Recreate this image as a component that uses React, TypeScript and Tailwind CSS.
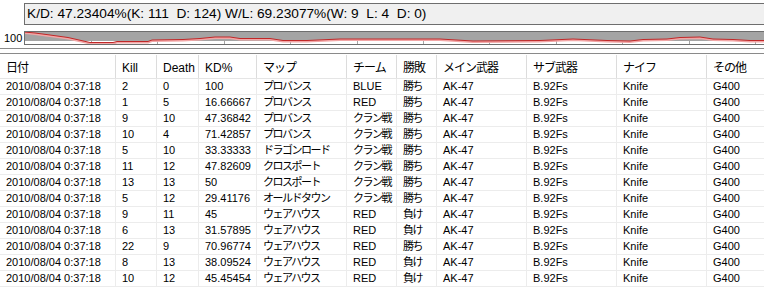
import { memo } from 'react';

const FONT = { fontFamily: '"Liberation Sans", "Noto Sans CJK JP", sans-serif' };

const columns = ['日付', 'Kill', 'Death', 'KD%', 'マップ', 'チーム', '勝敗', 'メイン武器', 'サブ武器', 'ナイフ', 'その他'];

const rows: string[][] = [
  ['2', '0', '100', 'プロバンス', 'BLUE', '勝ち'],
  ['1', '5', '16.66667', 'プロバンス', 'RED', '勝ち'],
  ['9', '10', '47.36842', 'プロバンス', 'クラン戦', '勝ち'],
  ['10', '4', '71.42857', 'プロバンス', 'クラン戦', '勝ち'],
  ['5', '10', '33.33333', 'ドラゴンロード', 'クラン戦', '勝ち'],
  ['11', '12', '47.82609', 'クロスポート', 'クラン戦', '勝ち'],
  ['13', '13', '50', 'クロスポート', 'クラン戦', '勝ち'],
  ['5', '12', '29.41176', 'オールドタウン', 'クラン戦', '勝ち'],
  ['9', '11', '45', 'ウェアハウス', 'RED', '負け'],
  ['6', '13', '31.57895', 'ウェアハウス', 'RED', '負け'],
  ['22', '9', '70.96774', 'ウェアハウス', 'RED', '勝ち'],
  ['8', '13', '38.09524', 'ウェアハウス', 'RED', '負け'],
  ['10', '12', '45.45454', 'ウェアハウス', 'RED', '負け'],
];

// KD history line, absolute page coords (chart inner box starts at x=25, y=32)
const points: [number, number][] = [
  [24, 32], [35, 33], [50, 35], [68, 37.5], [90, 42.5], [113, 42.5], [117, 41.5], [148, 41.5],
  [152, 40], [183, 39.5], [200, 38.5], [215, 37], [230, 37], [240, 38.5], [270, 38.5], [283, 40.5],
  [307, 40.5], [340, 39], [440, 39], [473, 41], [540, 40.5], [573, 39], [607, 40.5], [630, 41],
  [643, 39.5], [667, 39], [680, 37.5], [700, 37], [713, 39], [733, 39.5], [750, 40.5], [764, 40.5],
];

const ticks = [91, 157, 224, 290, 357, 423, 489, 556, 622, 689, 755];

const isWide = (s: string) => /[^\x00-\x7f]/.test(s);

const KdChart = memo(function KdChart() {
  const line = points.map(([x, y]) => `${x - 25},${y - 32}`).join(' ');
  const shade = points.map(([x, y]) => `${x - 25},${y - 31}`).join(' ');
  return (
    <div className="flex items-start mt-[6px] h-[14px]">
      <div className="w-[24px] text-[11px] leading-[11px] pl-[4px] pt-[2px] text-black">100</div>
      <div className="flex-1 h-[14px] border border-[#6e6e6e] border-r-0 bg-white overflow-hidden">
        <svg width="740" height="12" className="block">
          <rect x="0" y="0" width="740" height="9" fill="#a4a4a4" />
          {ticks.map((t) => (
            <line key={t} x1={t - 25 + 0.5} x2={t - 25 + 0.5} y1="9" y2="12" stroke="#a4a4a4" strokeWidth="1" />
          ))}
          <polyline points={shade} fill="none" stroke="#f2a6a6" strokeWidth="2" />
          <polyline points={line} fill="none" stroke="#c02828" strokeWidth="1" />
        </svg>
      </div>
    </div>
  );
});

export default function App() {
  return (
    <div className="w-[764px] h-[288px] bg-white overflow-hidden text-black" style={FONT}>
      {/* summary box */}
      <div className="ml-[24px] mt-[3px] h-[22px] border border-[#6e6e6e] border-r-0 bg-[#f0f0f0] pl-[2px] text-[13.7px] leading-[20px] whitespace-pre">
        K/D: 47.23404%(K: 111  D: 124) W/L: 69.23077%(W: 9  L: 4  D: 0)
      </div>

      <KdChart />

      {/* splitter */}
      <div className="mt-[3px] h-[6px] border-t border-b border-[#8a8a8a]" />

      {/* list view */}
      <div className="mt-[1px] text-[11px]">
        <div className="grid grid-cols-[116px_41px_42px_58px_90px_50px_40px_90px_90px_90px_57px] h-[24px] border-b border-[#e5e5e5]">
          {columns.map((c, i) => (
            <div
              key={c}
              className={`pl-[6px] pt-[6px] leading-[14px] text-[12px] ${i < columns.length - 1 ? 'border-r border-[#dcdcdc]' : ''} ${isWide(c) ? 'tracking-[-1px]' : 'text-[11px]'}`}
            >
              {c}
            </div>
          ))}
        </div>
        {rows.map((r, ri) => {
          const cells = ['2010/08/04 0:37:18', ...r, 'AK-47', 'B.92Fs', 'Knife', 'G400'];
          return (
            <div
              key={ri}
              className="grid grid-cols-[116px_41px_42px_58px_90px_50px_40px_90px_90px_90px_57px] h-[16px] border-b border-[#ececec]"
            >
              {cells.map((c, ci) => (
                <div
                  key={ci}
                  className={`pl-[6px] leading-[15px] whitespace-nowrap overflow-hidden ${ci < cells.length - 1 ? 'border-r border-[#ececec]' : ''} ${isWide(c) ? 'tracking-[-1.5px] text-[11px]' : ''}`}
                >
                  {c}
                </div>
              ))}
            </div>
          );
        })}
      </div>
    </div>
  );
}
